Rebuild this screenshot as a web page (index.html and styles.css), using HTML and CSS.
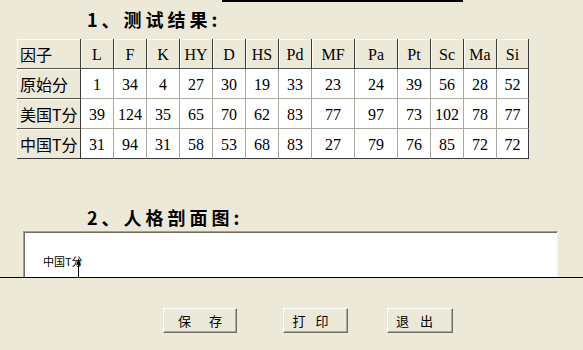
FILE: index.html
```html
<!DOCTYPE html>
<html lang="zh-CN">
<head>
<meta charset="utf-8">
<title>测试结果</title>
<link rel="stylesheet" href="styles.css">
</head>
<body>
<div class="report">
  <div class="topbar"></div>
  <h2 class="title">1、测试结果:</h2>
  <div class="grid" role="table">
    <div class="cell fixed first">因子</div>
    <div class="cell fixed">L</div>
    <div class="cell fixed">F</div>
    <div class="cell fixed">K</div>
    <div class="cell fixed">HY</div>
    <div class="cell fixed">D</div>
    <div class="cell fixed">HS</div>
    <div class="cell fixed">Pd</div>
    <div class="cell fixed">MF</div>
    <div class="cell fixed">Pa</div>
    <div class="cell fixed">Pt</div>
    <div class="cell fixed">Sc</div>
    <div class="cell fixed">Ma</div>
    <div class="cell fixed">Si</div>

    <div class="cell fixed first">原始分</div>
    <div class="cell">1</div><div class="cell">34</div><div class="cell">4</div><div class="cell">27</div><div class="cell">30</div><div class="cell">19</div><div class="cell">33</div><div class="cell">23</div><div class="cell">24</div><div class="cell">39</div><div class="cell">56</div><div class="cell">28</div><div class="cell">52</div>

    <div class="cell fixed first">美国T分</div>
    <div class="cell">39</div><div class="cell">124</div><div class="cell">35</div><div class="cell">65</div><div class="cell">70</div><div class="cell">62</div><div class="cell">83</div><div class="cell">77</div><div class="cell">97</div><div class="cell">73</div><div class="cell">102</div><div class="cell">78</div><div class="cell">77</div>

    <div class="cell fixed first">中国T分</div>
    <div class="cell">31</div><div class="cell">94</div><div class="cell">31</div><div class="cell">58</div><div class="cell">53</div><div class="cell">68</div><div class="cell">83</div><div class="cell">27</div><div class="cell">79</div><div class="cell">76</div><div class="cell">85</div><div class="cell">72</div><div class="cell">72</div>
  </div>
  <h2 class="title title2">2、人格剖面图:</h2>
  <div class="chart">
    <span class="chart-label">中国T分</span>
    <svg class="chart-arrow" width="7" height="30" viewBox="0 0 7 30">
      <line x1="3.5" y1="3" x2="3.5" y2="30" stroke="#000" stroke-width="1"/>
      <polygon points="3.5,0 1,8 3.5,6 6,8" fill="#000"/>
    </svg>
  </div>
</div>
<div class="actions">
  <button class="btn btn-save"><span>保</span><span>存</span></button>
  <button class="btn btn-print">打印</button>
  <button class="btn btn-exit">退出</button>
</div>
</body>
</html>
```
FILE: styles.css
```css
html, body {
  margin: 0;
  padding: 0;
}
body {
  width: 583px;
  height: 350px;
  overflow: hidden;
  background: #ECE9D8;
  font-family: "Noto Sans CJK SC", sans-serif;
  color: #000;
}
.report {
  height: 277px;
  overflow: hidden;
  border-bottom: 1px solid #000;
}
.topbar {
  width: 241px;
  height: 2px;
  margin-left: 222px;
  background: #000;
}
.title {
  margin: 6px 0 0 87px;
  font-size: 18px;
  line-height: 22px;
  font-weight: bold;
  letter-spacing: 4px;
  font-family: "Noto Sans CJK SC", sans-serif;
  white-space: nowrap;
}
.title2 {
  margin-top: 47px;
}
.grid {
  margin: 9px 0 0 17px;
  display: grid;
  grid-template-columns: 64px repeat(7, 33px) 43px 43px 33px 33px 33px 32px;
  grid-auto-rows: 30px;
  width: 512px;
  font-family: "Liberation Serif", "Noto Sans CJK SC", serif;
  font-size: 16px;
}
.cell {
  box-sizing: border-box;
  border-right: 1px solid #aaa9a0;
  border-bottom: 1px solid #aaa9a0;
  background: #fff;
  display: flex;
  align-items: center;
  justify-content: center;
  padding-top: 2px;
  white-space: nowrap;
}
.cell:nth-child(14n) {
  border-right-color: #3a3a3a;
}
.cell:nth-last-child(-n+14) {
  border-bottom-color: #3a3a3a;
}
.fixed {
  background: #ECE9D8;
  border-right-color: #3a3a3a;
  border-bottom-color: #55544c;
  box-shadow: inset 1px 1px 0 #fbfaf4;
}
.first {
  justify-content: flex-start;
  padding-left: 3px;
  padding-top: 0;
  font-family: "Noto Sans CJK SC", sans-serif;
  font-size: 16px;
  overflow: hidden;
}
.chart {
  position: relative;
  margin: 3px 0 0 23px;
  width: 535px;
  height: 60px;
  box-sizing: border-box;
  background: #fff;
  border-top: 1px solid #a09f96;
  border-left: 1px solid #a09f96;
  border-right: 1px solid #f5f4ee;
  box-shadow: inset 1px 1px 0 #716f64;
}
.chart-label {
  position: absolute;
  left: 19px;
  top: 22px;
  font-size: 11px;
  line-height: 14px;
}
.chart-arrow {
  position: absolute;
  left: 51px;
  top: 26px;
}
.actions {
  display: flex;
  align-items: flex-start;
  padding: 30px 0 0 163px;
}
.btn {
  height: 25px;
  box-sizing: border-box;
  margin: 0;
  padding: 0;
  background: #ECE9D8;
  border: 1px solid;
  border-color: #fff #716f64 #716f64 #fff;
  box-shadow: inset -1px -1px 0 #aca899;
  font-family: "Noto Sans CJK SC", sans-serif;
  font-size: 13px;
  line-height: 22px;
  color: #000;
  white-space: nowrap;
}
.btn-save {
  width: 74px;
  display: flex;
  justify-content: center;
  align-items: center;
  gap: 18px;
}
.btn-print {
  width: 65px;
  margin-left: 46px;
  letter-spacing: 10px;
}
.btn-exit {
  width: 66px;
  margin-left: 39px;
  letter-spacing: 11px;
}
```
